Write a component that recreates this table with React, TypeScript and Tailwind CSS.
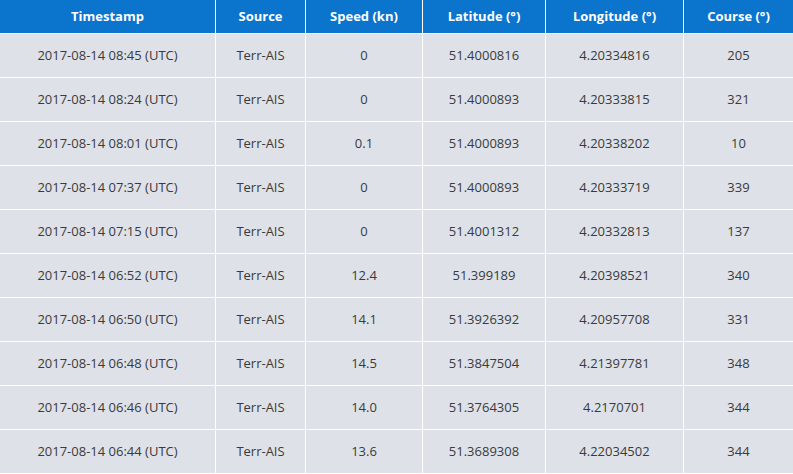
import React from "react";

const headers = ["Timestamp", "Source", "Speed (kn)", "Latitude (°)", "Longitude (°)", "Course (°)"];

const rows: string[][] = [
  ["2017-08-14 08:45 (UTC)", "Terr-AIS", "0", "51.4000816", "4.20334816", "205"],
  ["2017-08-14 08:24 (UTC)", "Terr-AIS", "0", "51.4000893", "4.20333815", "321"],
  ["2017-08-14 08:01 (UTC)", "Terr-AIS", "0.1", "51.4000893", "4.20338202", "10"],
  ["2017-08-14 07:37 (UTC)", "Terr-AIS", "0", "51.4000893", "4.20333719", "339"],
  ["2017-08-14 07:15 (UTC)", "Terr-AIS", "0", "51.4001312", "4.20332813", "137"],
  ["2017-08-14 06:52 (UTC)", "Terr-AIS", "12.4", "51.399189", "4.20398521", "340"],
  ["2017-08-14 06:50 (UTC)", "Terr-AIS", "14.1", "51.3926392", "4.20957708", "331"],
  ["2017-08-14 06:48 (UTC)", "Terr-AIS", "14.5", "51.3847504", "4.21397781", "348"],
  ["2017-08-14 06:46 (UTC)", "Terr-AIS", "14.0", "51.3764305", "4.2170701", "344"],
  ["2017-08-14 06:44 (UTC)", "Terr-AIS", "13.6", "51.3689308", "4.22034502", "344"],
];

export default function App() {
  return (
    <div
      className="w-[793px] h-[474px] bg-white overflow-hidden"
      style={{ fontFamily: '"Open Sans", "Liberation Sans", sans-serif' }}
    >
      <div className="grid grid-cols-[215px_89px_116px_122px_137px_109px] gap-px bg-white">
        {/* header */}
        {headers.map((h) => (
          <div
            key={h}
            className="h-[33px] bg-[#0b74cd] text-white text-[13px] font-bold flex items-center justify-center"
          >
            {h}
          </div>
        ))}
        {/* body */}
        {rows.map((r, i) =>
          r.map((c, j) => (
            <div
              key={i + "-" + j}
              className="h-[43px] bg-[#dee2e8] text-[#3a3a3a] text-[13px] flex items-center justify-center"
            >
              {c}
            </div>
          ))
        )}
      </div>
    </div>
  );
}
